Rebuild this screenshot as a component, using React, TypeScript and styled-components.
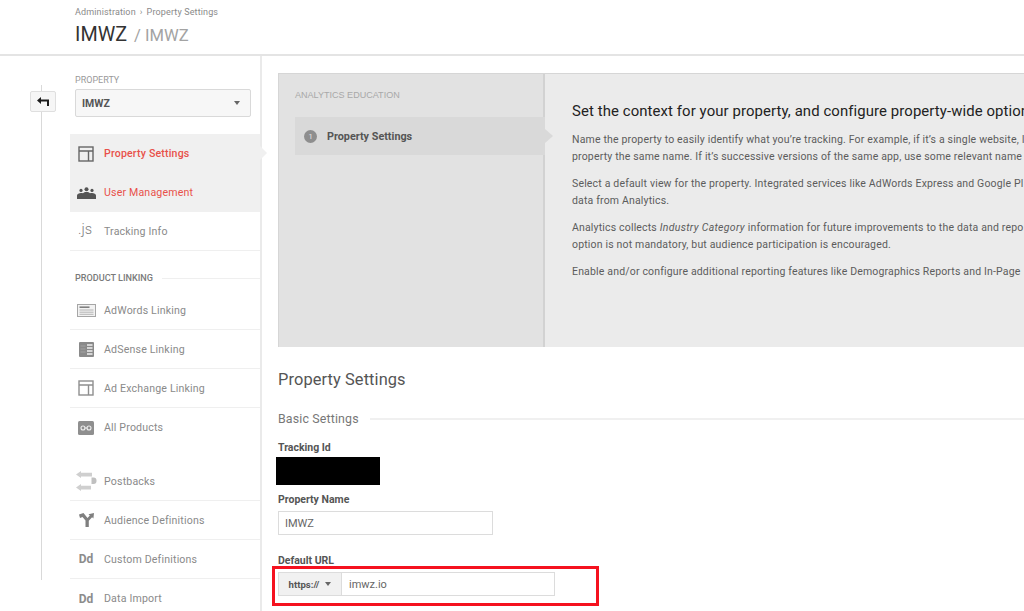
import styled, { createGlobalStyle } from 'styled-components';

const GlobalStyle = createGlobalStyle`
  html, body {
    margin: 0;
    width: 1024px;
    height: 611px;
    overflow: hidden;
    background: #fff;
    font-family: Roboto, "Liberation Sans", sans-serif;
  }
`;

const Page = styled.div`
  width: 1024px;
  height: 611px;
  overflow: hidden;
  display: flex;
  flex-direction: column;
`;

const Header = styled.header`
  height: 56px;
  flex: none;
  padding: 7px 0 0 75px;
  box-sizing: border-box;
  border-bottom: 2px solid #e4e4e4;
`;

const Crumbs = styled.div`
  font-size: 9px;
  line-height: 11px;
  color: #8a8a8a;
  letter-spacing: 0.14px;

  span {
    margin: 0 4px;
  }
`;

const Title = styled.h1`
  margin: 5px 0 0;
  font-size: 19.8px;
  line-height: 24px;
  font-weight: 400;
  color: #333;

  small {
    font-size: 16.6px;
    color: #a3a3a3;
    margin-left: 7px;
  }
`;

const Main = styled.div`
  flex: 1;
  display: flex;
  min-height: 0;
`;

const Rail = styled.div`
  width: 70px;
  flex: none;
  position: relative;

  &::before {
    content: '';
    position: absolute;
    left: 41px;
    top: 29px;
    height: 495px;
    width: 1px;
    background: #d9d9d9;
  }
`;

const BackButton = styled.button`
  position: absolute;
  left: 29.5px;
  top: 35px;
  width: 26px;
  height: 21px;
  padding: 0;
  display: flex;
  align-items: center;
  justify-content: center;
  background: #f6f6f6;
  border: 1px solid #dfdfdf;
  border-radius: 2px;
`;

const Sidebar = styled.aside`
  width: 192px;
  flex: none;
  box-sizing: border-box;
  border-right: 2px solid #eaeaea;
  padding-top: 19px;
`;

const PropertyLabel = styled.div`
  margin-left: 5px;
  font-size: 9px;
  line-height: 11px;
  color: #9a9a9a;
`;

const PropertySelect = styled.div`
  margin: 3px 9px 17px 5px;
  height: 28px;
  box-sizing: border-box;
  padding: 0 10px 0 6px;
  display: flex;
  align-items: center;
  justify-content: space-between;
  background: #f7f7f7;
  border: 1px solid #d9d9d9;
  border-radius: 2px;
  font-size: 10.5px;
  font-weight: 700;
  color: #555;
`;

const Caret = styled.i`
  width: 0;
  height: 0;
  border-left: 3.5px solid transparent;
  border-right: 3.5px solid transparent;
  border-top: 4px solid #666;
`;

const ActiveGroup = styled.div`
  background: #f0f0f0;
  position: relative;

  &::after {
    content: '';
    position: absolute;
    left: 100%;
    top: 12px;
    border-top: 7px solid transparent;
    border-bottom: 7px solid transparent;
    border-left: 7px solid #f0f0f0;
  }
`;

const NavRow = styled.div<{ $plain?: boolean }>`
  height: 39px;
  box-sizing: border-box;
  display: flex;
  align-items: center;
  border-bottom: ${(p) => (p.$plain ? '0' : '1px solid #efefef')};
`;

const NavIcon = styled.span`
  width: 32px;
  margin-right: 2px;
  flex: none;
  display: flex;
  justify-content: center;
  align-items: center;
`;

const JsGlyph = styled.span`
  font-size: 14.5px;
  line-height: 14px;
  font-weight: 300;
  color: #808080;
  position: relative;
  top: -1px;
  left: -1px;
`;

const NavText = styled.span<{ $active?: boolean; $bold?: boolean }>`
  font-size: 10.6px;
  letter-spacing: 0.17px;
  font-weight: ${(p) => (p.$bold ? 500 : 400)};
  color: ${(p) => (p.$active ? '#e8504a' : '#8a8a8a')};
`;

const SectionLabel = styled.div`
  height: 12px;
  padding: 21px 0 0 5px;
  display: flex;
  align-items: center;
  gap: 9px;
  font-size: 9.1px;
  font-weight: 500;
  color: #7a7a7a;

  &::after {
    content: '';
    flex: 1;
    height: 1px;
    background: #efefef;
  }
`;

const NavList = styled.div`
  margin-top: 7px;
`;

const NavGap = styled.div`
  height: 15px;
`;

const Dd = styled.b`
  font-size: 12px;
  font-weight: 700;
  color: #8c8c8c;
`;

const Content = styled.main`
  flex: 1;
  min-width: 0;
  padding: 17px 0 0 16px;
  overflow: hidden;
`;

const EduPanel = styled.section`
  width: 800px;
  height: 274px;
  display: flex;
  box-sizing: border-box;
  border: 1px solid #d6d6d6;
  border-width: 1px 0 0 1px;
`;

const EduNav = styled.div`
  width: 266px;
  flex: none;
  box-sizing: border-box;
  background: #e2e2e2;
  border-right: 2px solid #d2d2d2;
  padding: 16px 0 0 16px;
`;

const EduLabel = styled.div`
  font-family: "Liberation Sans", Arial, sans-serif;
  font-size: 9.05px;
  line-height: 11px;
  color: #a8a8a8;
`;

const EduStep = styled.div`
  position: relative;
  margin: 16px -2px 0 0;
  height: 38px;
  display: flex;
  align-items: center;
  padding-left: 9px;
  gap: 10px;
  background: #d9d9d9;
  font-size: 10.8px;
  font-weight: 700;
  color: #555;

  &::after {
    content: '';
    position: absolute;
    left: 100%;
    top: 12px;
    border-top: 7px solid transparent;
    border-bottom: 7px solid transparent;
    border-left: 8px solid #d9d9d9;
  }
`;

const StepBadge = styled.span`
  width: 13px;
  height: 13px;
  border-radius: 50%;
  background: #8e8e8e;
  color: #e6e6e6;
  font-size: 7.5px;
  font-weight: 400;
  display: flex;
  align-items: center;
  justify-content: center;
`;

const EduBody = styled.div`
  flex: 1;
  min-width: 0;
  background: #ebebeb;
  padding: 28px 0 0 27px;
  white-space: nowrap;
  overflow: hidden;
`;

const EduTitle = styled.h2`
  margin: 0 0 10px;
  font-size: 14.9px;
  line-height: 19px;
  font-weight: 400;
  letter-spacing: 0.1px;
  color: #222;
`;

const EduText = styled.p`
  margin: 0 0 10px;
  font-size: 10.5px;
  line-height: 17px;
  letter-spacing: 0.17px;
  color: #5c5c5c;

  em {
    letter-spacing: 0.3px;
  }
`;

const PageTitle = styled.h2`
  margin: 23px 0 0;
  font-size: 16.4px;
  line-height: 20px;
  font-weight: 400;
  letter-spacing: 0.1px;
  color: #555;
`;

const SubTitle = styled.h3`
  margin: 20px 0 0;
  display: flex;
  align-items: center;
  gap: 11px;
  font-size: 12.4px;
  line-height: 18px;
  font-weight: 400;
  letter-spacing: 0.15px;
  color: #777;

  &::after {
    content: '';
    flex: 1;
    height: 2px;
    background: #f0f0f0;
  }
`;

const FieldLabel = styled.label<{ $top?: number }>`
  display: block;
  margin-top: ${(p) => p.$top ?? 0}px;
  font-size: 10.5px;
  line-height: 13px;
  font-weight: 700;
  color: #555;
`;

const Redacted = styled.div`
  width: 104px;
  height: 28px;
  margin: 3px 0 8px -2px;
  background: #000;
`;

const TextBox = styled.div`
  width: 215px;
  height: 24px;
  margin-top: 5px;
  box-sizing: border-box;
  display: flex;
  align-items: center;
  padding-left: 6px;
  border: 1px solid #dcdcdc;
  font-size: 11px;
  color: #666;
`;

const UrlHighlight = styled.div`
  width: 327px;
  height: 40px;
  margin: -1px 0 0 -6px;
  box-sizing: border-box;
  border: 3px solid #f5121f;
  padding: 3px;
`;

const UrlGroup = styled.div`
  width: 277px;
  height: 24px;
  box-sizing: border-box;
  display: flex;
  border: 1px solid #dcdcdc;
`;

const Scheme = styled.div`
  width: 63px;
  flex: none;
  box-sizing: border-box;
  display: flex;
  align-items: center;
  justify-content: center;
  gap: 6px;
  background: #f1f1f1;
  border-right: 1px solid #dcdcdc;
  font-size: 9.6px;
  font-weight: 700;
  color: #555;
`;

const UrlValue = styled.div`
  display: flex;
  align-items: center;
  padding-left: 7px;
  font-size: 11px;
  color: #666;
`;

const BackIcon = () => (
  <svg width="12" height="9" viewBox="0 0 12 9">
    <path d="M0 3.5 4 0v2.500h8V9h-2V4.500H4V7z" fill="#1c1c1c" />
  </svg>
);

const SettingsIcon = ({ color = '#666' }: { color?: string }) => (
  <svg width="16" height="16" viewBox="0 0 16 16" fill="none" stroke={color} strokeWidth="1.4">
    <rect x="1" y="1" width="14" height="14" />
    <path d="M1 5h14M10.500 5v10" />
  </svg>
);

const UsersIcon = () => (
  <svg width="19" height="12" viewBox="0 0 19 12" fill="#555">
    <circle cx="4" cy="3.400" r="1.600" />
    <circle cx="9.500" cy="2.200" r="2" />
    <circle cx="15" cy="3.400" r="1.600" />
    <path d="M0 12V8.600C0 7 2 6 4 6c.8 0 1.400.1 2 .3C6.800 5.400 8 5 9.500 5s2.700.4 3.500 1.300c.6-.2 1.200-.3 2-.3 2 0 4 1 4 2.600V12z" />
  </svg>
);

const AdWordsIcon = () => (
  <svg width="19" height="13" viewBox="0 0 19 13">
    <rect x=".5" y=".5" width="18" height="12" fill="#f2f2f2" stroke="#a6a6a6" />
    <path d="M2.500 3.200h10" stroke="#808080" strokeWidth="1.600" />
    <path d="M2.500 6h14M2.500 8.200h14M2.500 10.300h14" stroke="#b4b4b4" />
  </svg>
);

const AdSenseIcon = () => (
  <svg width="15" height="15" viewBox="0 0 15 15">
    <rect width="15" height="15" rx="1" fill="#8a8a8a" />
    <path d="M1.500 4h5M1.500 7h5M1.500 10h5" stroke="#a8a8a8" strokeWidth=".8" />
    <path d="M8 3h5.500M8 6h5.500M8 9h5.500M8 12h5.500" stroke="#f0f0f0" strokeWidth="1.300" />
  </svg>
);

const LinkIcon = () => (
  <svg width="16" height="14" viewBox="0 0 16 14">
    <rect width="16" height="14" rx="1.500" fill="#8f8f8f" />
    <circle cx="5" cy="7" r="2" fill="none" stroke="#eee" strokeWidth="1.100" />
    <circle cx="11" cy="7" r="2" fill="none" stroke="#eee" strokeWidth="1.100" />
    <path d="M6.500 7h3" stroke="#eee" strokeWidth="1" />
  </svg>
);

const PostbacksIcon = () => (
  <svg width="21" height="20" viewBox="0 0 21 20" fill="#cfcfcf">
    <path d="M5 0 0 3.500 5 7V5.400h11V1.800H5z" />
    <path d="M5 13 0 16.500 5 20v-1.600h10v-3.600H5z" />
    <path d="M15.500 6.500h2a3 3 0 0 1 3 3v.5a3 3 0 0 1-3 3h-2z" fill="#c0c0c0" />
  </svg>
);

const AudienceIcon = () => (
  <svg width="15" height="14" viewBox="0 0 15 14" fill="#7f7f7f">
    <path d="M0 1.500 4.500 0l4 5 2.300-2.400L9.500 1.300 15 0l-.6 5.500-1.300-1.300-3.300 3.500V14H6.500V7.500L3.500 4 1 5z" />
  </svg>
);

const App = () => {
  return (
    <Page>
      <GlobalStyle />
      <Header>
        <Crumbs>
          Administration<span>›</span>Property Settings
        </Crumbs>
        <Title>
          IMWZ<small>/ IMWZ</small>
        </Title>
      </Header>
      <Main>
        <Rail>
          <BackButton aria-label="Back">
            <BackIcon />
          </BackButton>
        </Rail>
        <Sidebar>
          <PropertyLabel>PROPERTY</PropertyLabel>
          <PropertySelect>
            IMWZ
            <Caret />
          </PropertySelect>
          <ActiveGroup>
            <NavRow $plain>
              <NavIcon>
                <SettingsIcon />
              </NavIcon>
              <NavText $active $bold>
                Property Settings
              </NavText>
            </NavRow>
            <NavRow $plain>
              <NavIcon>
                <UsersIcon />
              </NavIcon>
              <NavText $active>User Management</NavText>
            </NavRow>
          </ActiveGroup>
          <NavRow>
            <NavIcon>
              <JsGlyph>.js</JsGlyph>
            </NavIcon>
            <NavText>Tracking Info</NavText>
          </NavRow>
          <SectionLabel>PRODUCT LINKING</SectionLabel>
          <NavList>
            <NavRow>
              <NavIcon>
                <AdWordsIcon />
              </NavIcon>
              <NavText>AdWords Linking</NavText>
            </NavRow>
            <NavRow>
              <NavIcon>
                <AdSenseIcon />
              </NavIcon>
              <NavText>AdSense Linking</NavText>
            </NavRow>
            <NavRow>
              <NavIcon>
                <SettingsIcon color="#8f8f8f" />
              </NavIcon>
              <NavText>Ad Exchange Linking</NavText>
            </NavRow>
            <NavRow $plain>
              <NavIcon>
                <LinkIcon />
              </NavIcon>
              <NavText>All Products</NavText>
            </NavRow>
            <NavGap />
            <NavRow>
              <NavIcon>
                <PostbacksIcon />
              </NavIcon>
              <NavText>Postbacks</NavText>
            </NavRow>
            <NavRow>
              <NavIcon>
                <AudienceIcon />
              </NavIcon>
              <NavText>Audience Definitions</NavText>
            </NavRow>
            <NavRow>
              <NavIcon>
                <Dd>Dd</Dd>
              </NavIcon>
              <NavText>Custom Definitions</NavText>
            </NavRow>
            <NavRow $plain>
              <NavIcon>
                <Dd>Dd</Dd>
              </NavIcon>
              <NavText>Data Import</NavText>
            </NavRow>
          </NavList>
        </Sidebar>
        <Content>
          <EduPanel>
            <EduNav>
              <EduLabel>ANALYTICS EDUCATION</EduLabel>
              <EduStep>
                <StepBadge>1</StepBadge>
                Property Settings
              </EduStep>
            </EduNav>
            <EduBody>
              <EduTitle>Set the context for your property, and configure property-wide options</EduTitle>
              <EduText>
                Name the property to easily identify what you’re tracking. For example, if it’s a single website, I
                <br />
                property the same name. If it’s successive versions of the same app, use some relevant name
              </EduText>
              <EduText>
                Select a default view for the property. Integrated services like AdWords Express and Google Pl
                <br />
                data from Analytics.
              </EduText>
              <EduText>
                Analytics collects <em>Industry Category</em> information for future improvements to the data and repo
                <br />
                option is not mandatory, but audience participation is encouraged.
              </EduText>
              <EduText>Enable and/or configure additional reporting features like Demographics Reports and In-Page</EduText>
            </EduBody>
          </EduPanel>
          <PageTitle>Property Settings</PageTitle>
          <SubTitle>Basic Settings</SubTitle>
          <FieldLabel $top={13}>Tracking Id</FieldLabel>
          <Redacted />
          <FieldLabel>Property Name</FieldLabel>
          <TextBox>IMWZ</TextBox>
          <FieldLabel $top={19}>Default URL</FieldLabel>
          <UrlHighlight>
            <UrlGroup>
              <Scheme>
                https://
                <Caret />
              </Scheme>
              <UrlValue>imwz.io</UrlValue>
            </UrlGroup>
          </UrlHighlight>
        </Content>
      </Main>
    </Page>
  );
};

export default App;
